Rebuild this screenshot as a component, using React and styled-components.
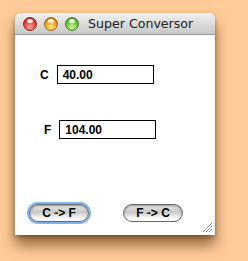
import React from "react";
import styled, { createGlobalStyle } from "styled-components";

const Global = createGlobalStyle`
  html, body {
    margin: 0;
    padding: 0;
    background: #ffcb98;
  }
  body {
    width: 248px;
    height: 261px;
    overflow: hidden;
    font-family: "Liberation Sans", Arial, sans-serif;
  }
`;

const Window = styled.div`
  margin: 13px 0 0 15px;
  width: 200px;
  height: 222px;
  display: flex;
  flex-direction: column;
  background: #fff;
  border-radius: 6px 6px 0 0;
  box-shadow: 0 10px 14px rgba(70, 35, 0, 0.6), 0 2px 4px rgba(0, 0, 0, 0.3);
  position: relative;
`;

const TitleBar = styled.div`
  height: 21px;
  display: flex;
  align-items: center;
  padding-left: 8px;
  gap: 7px;
  border-radius: 6px 6px 0 0;
  background: linear-gradient(#f2f2f2, #d9d9d9 55%, #c9c9c9);
  border-bottom: 1px solid #9a9a9a;
`;

const Light = styled.span`
  width: 14px;
  height: 14px;
  border-radius: 50%;
  box-sizing: border-box;
  border: 1px solid ${(p) => p.edge};
  background: radial-gradient(circle at 50% 75%, ${(p) => p.glow} 0%, ${(p) => p.color} 55%, ${(p) => p.dark} 100%);
  position: relative;
  &::after {
    content: "";
    position: absolute;
    left: 3px;
    top: 1px;
    width: 6px;
    height: 4px;
    border-radius: 50%;
    background: rgba(255, 255, 255, 0.85);
  }
`;

const Title = styled.span`
  margin-left: 2px;
  font-family: "DejaVu Sans", sans-serif;
  font-size: 12.6px;
  color: #222;
`;

const Content = styled.div`
  flex: 1;
  display: flex;
  flex-direction: column;
  padding-top: 30px;
`;

const Row = styled.div`
  display: flex;
  align-items: center;
  padding-left: ${(p) => p.indent}px;
  gap: 8px;
  margin-bottom: ${(p) => p.after || 0}px;
`;

const Label = styled.span`
  font-weight: bold;
  font-size: 12px;
  color: #000;
`;

const Field = styled.div`
  width: 97px;
  height: 19px;
  box-sizing: border-box;
  border: 1px solid #000;
  padding-left: 5px;
  display: flex;
  align-items: center;
  font-weight: bold;
  font-size: 12px;
  color: #000;
`;

const Buttons = styled.div`
  margin-top: auto;
  margin-bottom: 13px;
  display: flex;
  align-items: center;
  padding-left: 14px;
  gap: 34px;
`;

const Button = styled.div`
  width: 60px;
  height: 18px;
  box-sizing: border-box;
  border-radius: 9px;
  border: 1px solid #6a6a6a;
  background: linear-gradient(#e9e9e9, #c8c8c8 45%, #f6f6f6 80%, #ffffff);
  box-shadow: ${(p) =>
    p.focused ? "0 0 0 2px #7fb2f0, inset 0 1px 2px rgba(0,0,0,0.35)" : "inset 0 1px 2px rgba(0,0,0,0.35)"};
  display: flex;
  align-items: center;
  justify-content: center;
  font-weight: bold;
  font-size: 12px;
  color: #000;
  margin-top: ${(p) => (p.focused ? 0 : -1)}px;
`;

const Grip = styled.svg`
  position: absolute;
  right: 2px;
  bottom: 2px;
`;

export default function App() {
  return (
    <>
      <Global />
      <Window>
        <TitleBar>
          <Light color="#e0433f" glow="#ff9f8f" dark="#8c1210" edge="#8a2a28" />
          <Light color="#f0a21d" glow="#ffe27a" dark="#9b5200" edge="#9a6a20" />
          <Light color="#6cc23a" glow="#c8f59a" dark="#2e6e0e" edge="#4d7f2e" />
          <Title>Super Conversor</Title>
        </TitleBar>
        <Content>
          <Row indent={25} after={36}>
            <Label>C</Label>
            <Field>40.00</Field>
          </Row>
          <Row indent={29}>
            <Label>F</Label>
            <Field>104.00</Field>
          </Row>
          <Buttons>
            <Button focused>C -&gt; F</Button>
            <Button>F -&gt; C</Button>
          </Buttons>
        </Content>
        <Grip width="11" height="11" viewBox="0 0 11 11">
          <path d="M10 1 L1 10 M10 4 L4 10 M10 7 L7 10" stroke="#8a8a8a" strokeWidth="1" />
        </Grip>
      </Window>
    </>
  );
}
